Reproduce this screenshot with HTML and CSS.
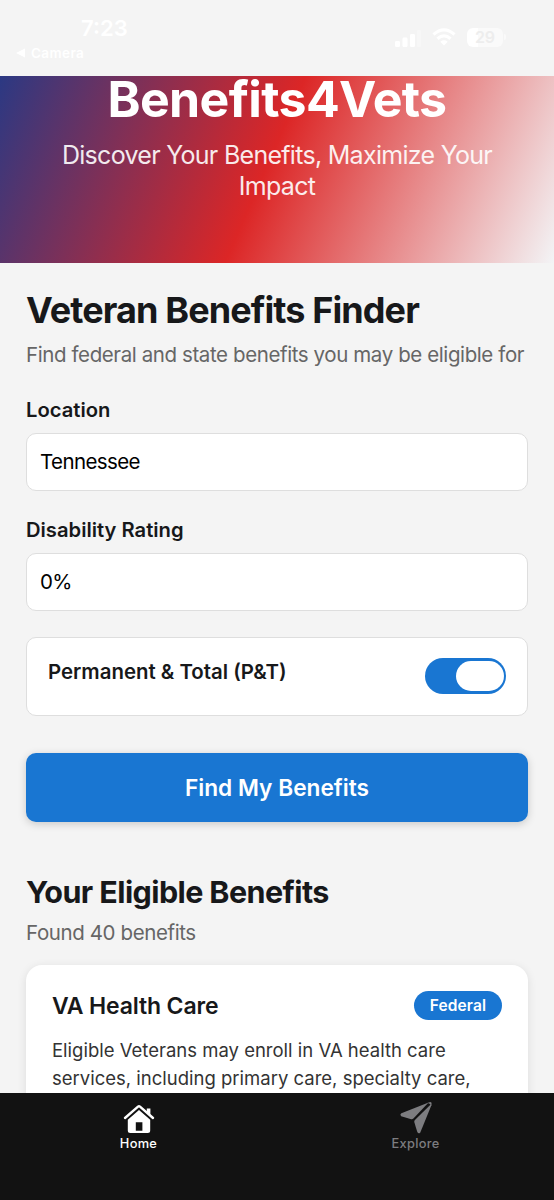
FILE: index.html
```
<!DOCTYPE html>
<html lang="en">
<head>
<meta charset="UTF-8">
<meta name="viewport" content="width=device-width, initial-scale=1.0">
<title>Benefits4Vets</title>
<link rel="stylesheet" href="styles.css">
</head>
<body>
<div id="app">
    <div class="status-bar">
        <div class="status-left">
            <div class="time">7:23</div>
            <div class="back-app">
                <svg width="10" height="10" viewBox="0 0 10 10"><path d="M0 5 L9 0.5 V9.5 Z" fill="#fff"/></svg>
                <span>Camera</span>
            </div>
        </div>
        <div class="status-right">
            <svg class="signal" width="26" height="17" viewBox="0 0 26 17" fill="#fff">
                <rect x="0" y="11" width="5" height="6" rx="1.2"/>
                <rect x="7.5" y="7.5" width="5" height="9.5" rx="1.2"/>
                <rect x="15" y="4" width="5" height="13" rx="1.2"/>
                <rect x="22" y="0" width="4" height="17" rx="1.2" opacity="0.3"/>
            </svg>
            <svg class="wifi" width="24" height="18" viewBox="0 0 24 18" fill="none" stroke="#fff" stroke-width="3.2">
                <path d="M1.5 6.5 Q12 -2.8 22.5 6.5"/>
                <path d="M5.5 10.7 Q12 5 18.5 10.7"/>
                <path d="M12 17.5 L8.3 13.7 Q12 10.8 15.7 13.7 Z" fill="#fff" stroke="none"/>
            </svg>
            <div class="battery-wrap">
                <div class="battery">29</div>
                <div class="battery-tip"></div>
            </div>
        </div>
    </div>

    <header class="hero">
        <h1>Benefits4Vets</h1>
        <p>Discover Your Benefits, Maximize Your Impact</p>
    </header>

    <main class="content">
        <h2 class="finder-title">Veteran Benefits Finder</h2>
        <p class="subtitle">Find federal and state benefits you may be eligible for</p>

        <div class="label">Location</div>
        <div class="field">Tennessee</div>

        <div class="label">Disability Rating</div>
        <div class="field">0%</div>

        <div class="toggle-row">
            <span class="toggle-label">Permanent &amp; Total (P&amp;T)</span>
            <div class="switch"><div class="knob"></div></div>
        </div>

        <button class="find-button">Find My Benefits</button>

        <h2 class="results-title">Your Eligible Benefits</h2>
        <p class="found">Found 40 benefits</p>

        <div class="card">
            <div class="card-head">
                <h3>VA Health Care</h3>
                <span class="badge">Federal</span>
            </div>
            <p>Eligible Veterans may enroll in VA health care<br>services, including primary care, specialty care,</p>
        </div>
    </main>

    <nav class="tabs">
        <div class="tab active">
            <svg width="32" height="32" viewBox="0 -2 32 32" fill="#fff">
                <path d="M2 14 L15 2.6 Q16 1.8 17 2.6 L30 14" fill="none" stroke="#fff" stroke-width="2.4" stroke-linecap="round" stroke-linejoin="round"/>
                <path d="M23.8 4.5 H27.4 V11.5 L23.8 8.3 Z"/>
                <path fill-rule="evenodd" d="M4.8 15.8 L16 6 L27.2 15.8 V26.5 Q27.2 29 24.7 29 H7.3 Q4.8 29 4.8 26.5 Z M12.8 18.2 V26.8 H19.4 V18.2 Z"/>
            </svg>
            <span>Home</span>
        </div>
        <div class="tab">
            <svg width="32" height="32" viewBox="0 0 32 32" fill="#7d7d80">
                <path d="M28.6 .4 L1.4 11.2 Q-.4 12.3 1.2 14.2 L11.2 17.2 Q12.5 17.4 13.4 16.5 Z"/>
                <path d="M31.2 2 L14.9 17.9 Q14 19 14.4 20.4 L17.3 30 Q18.6 32.4 20.3 30.4 L31.4 3.2 Z"/>
                <path d="M27.5 .9 L30.2 .1 Q31.9 .1 31.6 1.8 L31 3.4 L30.4 2.4 L29.2 1.6 Z"/>
            </svg>
            <span>Explore</span>
        </div>
    </nav>
</div>
</body>
</html>
```
FILE: styles.css
```
* {
    box-sizing: border-box;
}

body {
    margin: 0;
    background: #f4f4f4;
    color: #17181a;
    font-family: Inter, "Liberation Sans", sans-serif;
}

h1, h2, h3, p {
    margin: 0;
    white-space: nowrap;
}

#app {
    width: 554px;
    height: 1200px;
    display: flex;
    flex-direction: column;
    overflow: hidden;
}

/* status bar */
.status-bar {
    flex: none;
    height: 76px;
    display: flex;
    justify-content: space-between;
    color: #fff;
}

.status-left {
    padding: 15px 0 0 16px;
}

.time {
    padding-left: 65px;
    font-size: 22px;
    font-weight: 600;
    line-height: 27px;
}

.back-app {
    display: flex;
    align-items: center;
    gap: 5px;
    font-size: 13.5px;
    font-weight: 600;
    letter-spacing: 0.4px;
    line-height: 22px;
}

.status-right {
    display: flex;
    align-items: center;
    gap: 11px;
    height: 20px;
    margin: 27px 48px 0 0;
}

.signal {
    margin-top: 2px;
}

.battery-wrap {
    display: flex;
    align-items: center;
    gap: 1px;
}

.battery {
    width: 36px;
    height: 19px;
    border-radius: 6px;
    background: linear-gradient(90deg, #fff 30%, #fafafa 30%);
    color: #ededed;
    font-size: 16px;
    font-weight: 600;
    line-height: 19px;
    text-align: center;
}

.battery-tip {
    width: 2px;
    height: 6px;
    border-radius: 0 2px 2px 0;
    background: #fafafa;
}

/* header */
.hero {
    flex: none;
    height: 187px;
    background: linear-gradient(113.4deg, #1e3a8a 0%, #dc2626 50%, #f3f4f6 100%) bottom / 554px 240px no-repeat;
    color: #fff;
    text-align: center;
}

.hero h1 {
    font-size: 50px;
    font-weight: 700;
    letter-spacing: -0.65px;
    line-height: 46px;
}

.hero p {
    width: 470px;
    margin: 18px auto 0;
    font-size: 25px;
    letter-spacing: -0.71px;
    line-height: 31px;
    white-space: normal;
    opacity: 0.9;
}

/* form */
.content {
    flex: 1;
    min-height: 0;
    padding: 24px 26px 0;
    overflow: hidden;
}

.finder-title {
    font-size: 36px;
    letter-spacing: -0.9px;
    line-height: 46px;
}

.subtitle,
.found {
    color: #666;
    font-size: 20.5px;
    letter-spacing: -0.4px;
    line-height: 26px;
}

.subtitle {
    margin: 9px 0 29px;
}

.label {
    font-size: 20.2px;
    font-weight: 600;
    line-height: 26px;
    margin-bottom: 10px;
    white-space: nowrap;
}

.field {
    height: 58px;
    margin-bottom: 26px;
    padding: 0 13px;
    background: #fff;
    border: 1.3px solid #dedede;
    border-radius: 10px;
    color: #000;
    font-size: 20.5px;
    letter-spacing: -0.6px;
    line-height: 56px;
}

.toggle-row {
    display: flex;
    justify-content: space-between;
    height: 79px;
    padding: 20px 21px;
    background: #fff;
    border: 1.3px solid #dedede;
    border-radius: 10px;
}

.toggle-label {
    font-size: 20.4px;
    font-weight: 600;
    line-height: 28px;
    white-space: nowrap;
}

.switch {
    width: 81px;
    height: 36px;
    padding: 3px 2px;
    border-radius: 18px;
    background: #1976d2;
}

.knob {
    width: 48px;
    height: 30px;
    margin-left: auto;
    border-radius: 15px;
    background: #fff;
}

.find-button {
    display: block;
    width: 100%;
    height: 69px;
    margin: 36.5px 0 49.5px;
    border: none;
    border-radius: 10px;
    background: #1976d2;
    box-shadow: 0 2px 8px rgba(0, 0, 0, 0.18);
    color: #fff;
    font: 600 22.7px Inter, sans-serif;
}

/* results */
.results-title {
    font-size: 30.5px;
    letter-spacing: -0.6px;
    line-height: 42px;
}

.found {
    margin: 7px 0 19px;
}

.card {
    height: 200px;
    padding: 26px;
    background: #fff;
    border-radius: 16px;
    box-shadow: 0 2px 10px rgba(0, 0, 0, 0.1);
}

.card-head {
    display: flex;
    justify-content: space-between;
    align-items: center;
    height: 29px;
    margin-bottom: 16px;
}

.card h3 {
    font-size: 23px;
    font-weight: 600;
    letter-spacing: -0.15px;
}

.badge {
    width: 88px;
    height: 29px;
    border-radius: 15px;
    background: #1976d2;
    color: #fff;
    font-size: 15.5px;
    font-weight: 600;
    letter-spacing: 0.1px;
    line-height: 29px;
    text-align: center;
}

.card p {
    color: #333;
    font-size: 18.5px;
    line-height: 28px;
}

/* bottom tabs */
.tabs {
    flex: none;
    display: flex;
    height: 107px;
    background: #121212;
}

.tab {
    flex: 1;
    display: flex;
    flex-direction: column;
    align-items: center;
    padding-top: 9px;
    color: #7d7d80;
    font-size: 12.8px;
    font-weight: 500;
    letter-spacing: 0.3px;
    line-height: 17px;
}

.tab svg {
    height: 32px;
    margin-bottom: 1px;
}

.tab.active {
    color: #fff;
}
```
